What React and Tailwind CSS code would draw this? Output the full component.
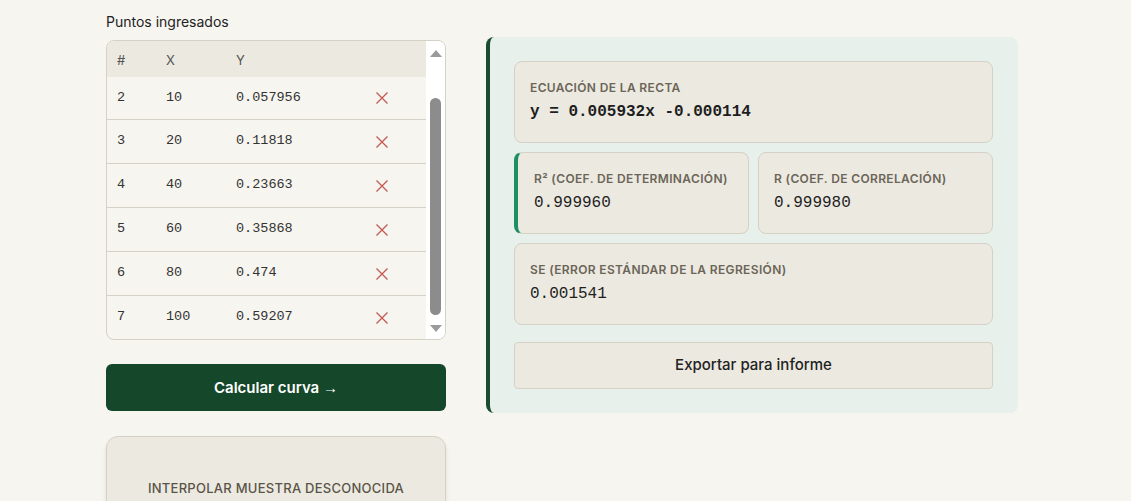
import React from "react";

const points = [
  { n: 1, x: "0", y: "0" },
  { n: 2, x: "10", y: "0.057956" },
  { n: 3, x: "20", y: "0.11818" },
  { n: 4, x: "40", y: "0.23663" },
  { n: 5, x: "60", y: "0.35868" },
  { n: 6, x: "80", y: "0.474" },
  { n: 7, x: "100", y: "0.59207" },
];

const sans = "font-['Inter','Noto_Sans',sans-serif]";
const mono = "font-['Courier_New','Liberation_Mono',monospace]";
const cols = "grid grid-cols-[49px_70px_1fr_51px]";

function RemoveIcon() {
  return (
    <svg width="14" height="14" viewBox="0 0 14 14" className="text-[#c4554f]">
      <path d="M1.5 1.5 L12.5 12.5 M12.5 1.5 L1.5 12.5" stroke="currentColor" strokeWidth="1.2" fill="none" />
    </svg>
  );
}

function Arrow({ down }) {
  return (
    <svg width="12" height="9" viewBox="0 0 12 9" className="text-[#9a9a9a]">
      <path d={down ? "M0 1 L12 1 L6 8 Z" : "M0 8 L12 8 L6 1 Z"} fill="currentColor" />
    </svg>
  );
}

function ScrollTrack() {
  return (
    <div className="w-[19px] shrink-0 bg-white flex flex-col items-center">
      <div className="h-[17px] flex items-end">
        <Arrow />
      </div>
      <div className="flex-1 pt-[40px]">
        <div className="w-[11px] h-[217px] rounded-full bg-[#8c8c8c]" />
      </div>
      <div className="h-[17px] flex items-start pt-[2px]">
        <Arrow down />
      </div>
    </div>
  );
}

function PointsTable() {
  // list is scrolled to the end, so the first point sits above the fold
  const visible = points.slice(1);

  return (
    <div className="flex border border-[#d6d1c6] rounded-lg bg-[#f7f5f0] overflow-hidden">
      <div className="flex-1 min-w-0">
        <div className={`${cols} h-9 pt-1 items-center bg-[#ece9e1] text-[13px] text-[#555]`}>
          <span className="pl-[10px]">#</span>
          <span className="pl-[10px]">X</span>
          <span className="pl-[10px]">Y</span>
          <span />
        </div>
        {visible.map((p, i) => {
          const last = i === visible.length - 1;
          return (
            <div
              key={p.n}
              className={`${cols} items-center text-[13.5px] text-[#333] ${mono} ${
                i === 0 ? "h-[43px]" : last ? "h-[43px]" : "h-11"
              } ${last ? "" : "border-b border-[#d6d1c6]"}`}
            >
              <span className="pl-[10px]">{p.n}</span>
              <span className="pl-[10px]">{p.x}</span>
              <span className="pl-[10px]">{p.y}</span>
              <span className="flex">
                <RemoveIcon />
              </span>
            </div>
          );
        })}
      </div>
      <ScrollTrack />
    </div>
  );
}

function StatCard({ label, value, bold, accent }) {
  return (
    <div
      className={`bg-[#ece9e1] border border-[#d6d1c6] rounded-lg py-[18px] pr-4 ${
        accent ? "border-l-4 border-l-[#1d8f63] pl-4" : "pl-[15px]"
      }`}
    >
      <div className="text-xs leading-4 font-semibold tracking-[0.03em] text-[#6b6557] uppercase">{label}</div>
      <div className={`mt-1 text-base leading-6 text-[#1e1e1e] ${mono} ${bold ? "font-bold" : ""}`}>{value}</div>
    </div>
  );
}

export default function App() {
  return (
    <div className={`h-[501px] overflow-hidden bg-[#f7f5f0] ${sans}`}>
      <div className="flex items-start gap-10 pl-[106px] pt-3">
        {/* data entry column */}
        <div className="w-[340px] shrink-0">
          <div className="text-sm leading-5 text-[#222] mb-2">Puntos ingresados</div>
          <PointsTable />
          <button className="mt-6 w-full h-[47px] rounded-md bg-[#15472a] text-white text-[15px] font-semibold">
            Calcular curva <span className="font-['Noto_Sans',sans-serif] font-normal">→</span>
          </button>
          <div className="mt-[25px] h-[120px] rounded-xl bg-[#ece9e1] border border-[#d6d1c6] shadow-md pt-[42px] text-center">
            <div className="text-[13px] font-medium tracking-[0.02em] text-[#5a5448]">INTERPOLAR MUESTRA DESCONOCIDA</div>
          </div>
        </div>

        {/* regression results */}
        <div className="mt-[25px] w-[532px] shrink-0 bg-[#e7f0ea] border-l-4 border-[#1a4d30] rounded-lg pl-6 pr-[25px] py-6 flex flex-col gap-[9px]">
          <StatCard label="Ecuación de la recta" value="y = 0.005932x -0.000114" bold />
          <div className="grid grid-cols-2 gap-[9px]">
            <StatCard label="R² (coef. de determinación)" value="0.999960" accent />
            <StatCard label="R (coef. de correlación)" value="0.999980" />
          </div>
          <StatCard label="SE (error estándar de la regresión)" value="0.001541" />
          <button className="mt-2 h-[47px] rounded bg-[#ece9e1] border border-[#d6d1c6] text-[15px] font-medium text-[#222]">
            Exportar para informe
          </button>
        </div>
      </div>
    </div>
  );
}
